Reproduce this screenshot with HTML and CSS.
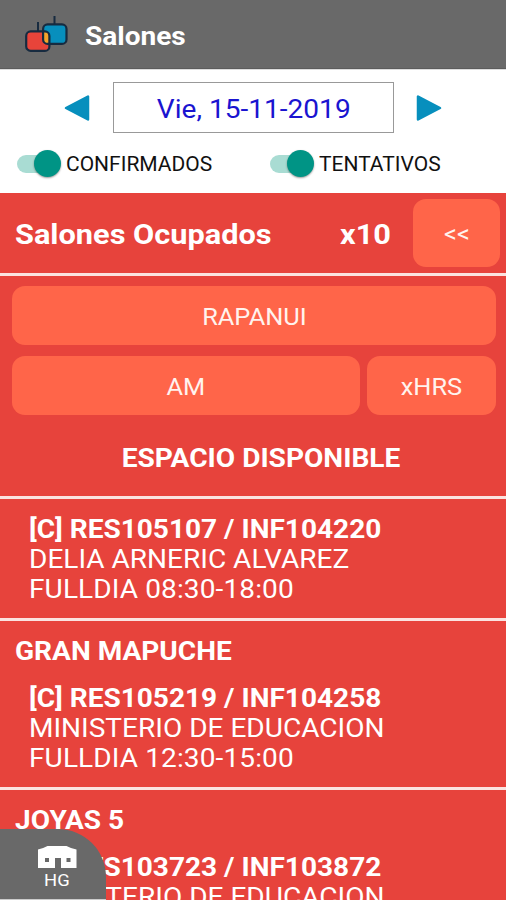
FILE: index.html
```html
<!DOCTYPE html>
<html lang="es">
<head>
    <meta charset="UTF-8">
    <meta name="viewport" content="width=device-width, initial-scale=1.0">
    <title>Salones</title>
    <link rel="stylesheet" href="styles.css">
</head>
<body>
    <header class="topbar">
        <svg class="logo" width="46" height="39" viewBox="0 0 46 39">
            <path d="M14 8v9M30.500 2v9" stroke="#172b40" stroke-width="2"/>
            <rect x="2.200" y="17.400" width="23.200" height="19.500" rx="4.500" fill="#e8443a"/>
            <rect x="19.100" y="10.400" width="23.400" height="19.500" rx="4.500" fill="#078fbd"/>
            <path d="M19.100 17.400h2a4.300 4.300 0 0 1 4.300 4.300v8.200h-2a4.300 4.300 0 0 1-4.300-4.300z" fill="#f7a42b"/>
            <rect x="2.200" y="17.400" width="23.200" height="19.500" rx="4.500" fill="none" stroke="#172b40" stroke-width="2.200"/>
            <rect x="19.100" y="10.400" width="23.400" height="19.500" rx="4.500" fill="none" stroke="#172b40" stroke-width="2.200"/>
        </svg>
        <h1 class="wide">Salones</h1>
    </header>

    <div class="filters">
        <div class="date-row">
            <svg class="arrow" width="26" height="28" viewBox="0 0 26 28">
                <path d="M24 2.500v23L2 14z" fill="#078fbd" stroke="#078fbd" stroke-width="2.500" stroke-linejoin="round"/>
            </svg>
            <div class="date"><span class="wide-center">Vie, 15-11-2019</span></div>
            <svg class="arrow" width="26" height="28" viewBox="0 0 26 28">
                <path d="M2 2.500v23L24 14z" fill="#078fbd" stroke="#078fbd" stroke-width="2.500" stroke-linejoin="round"/>
            </svg>
        </div>
        <div class="switch-row">
            <div class="option"><span class="switch"></span><span class="label">CONFIRMADOS</span></div>
            <div class="option"><span class="switch"></span><span class="label">TENTATIVOS</span></div>
        </div>
    </div>

    <main>
        <div class="summary">
            <h2 class="wide">Salones Ocupados</h2>
            <span class="count wide">x10</span>
            <button class="back"><span class="wide-center">&lt;&lt;</span></button>
        </div>

        <div class="room">
            <button class="room-name"><span class="wide-center">RAPANUI</span></button>
            <div class="room-times">
                <button class="am"><span class="wide-center">AM</span></button>
                <button class="hrs"><span class="wide-center">xHRS</span></button>
            </div>
            <h3 class="available"><span class="wide-center">ESPACIO DISPONIBLE</span></h3>
        </div>

        <div class="booking">
            <div class="entry wide">
                <p class="code">[C] RES105107 / INF104220</p>
                <p>DELIA ARNERIC ALVAREZ</p>
                <p class="hours">FULLDIA 08:30-18:00</p>
            </div>
        </div>

        <div class="booking">
            <h3 class="wide">GRAN MAPUCHE</h3>
            <div class="entry wide">
                <p class="code">[C] RES105219 / INF104258</p>
                <p>MINISTERIO DE EDUCACION</p>
                <p class="hours">FULLDIA 12:30-15:00</p>
            </div>
        </div>

        <div class="booking">
            <h3 class="wide">JOYAS 5</h3>
            <div class="entry wide">
                <p class="code">[C] RES103723 / INF103872</p>
                <p>MINISTERIO DE EDUCACION</p>
            </div>
        </div>
    </main>

    <div class="home-tab">
        <svg width="40" height="24" viewBox="0 0 40 24">
            <path fill="#fff" d="M1 4.500Q6 3.500 10.500 1h19q4.500 2.500 10 3.500V23H24V13h-6v10H1z"/>
            <path fill="#696969" d="M8 13h4v4H8zM29.500 13h4v4h-4z"/>
        </svg>
        <span class="wide-center">HG</span>
    </div>
</body>
</html>
```

FILE: styles.css
```css
* {
    box-sizing: border-box;
}
body {
    font-family: Roboto, Arial, sans-serif;
    margin: 0;
    height: 900px;
    overflow: hidden;
    position: relative;
    background-color: #e7433c;
    color: #fff;
    white-space: nowrap;
}
h1, h2, h3, p {
    margin: 0;
}
/* slightly extended lettering */
.wide {
    transform: scaleX(1.078);
    transform-origin: left;
}
.wide-center {
    display: inline-block;
    transform: scaleX(1.08);
}
.topbar {
    height: 69px;
    display: flex;
    align-items: center;
    padding-left: 24px;
    background-color: #696969;
    border-bottom: 1px solid #5c5c5c;
}
.topbar h1 {
    font-size: 26px;
    line-height: 30px;
    margin-left: 15px;
    padding-top: 3px;
}
.logo {
    margin-top: -1px;
}
.filters {
    height: 124px;
    padding-top: 12px;
    background-color: #fff;
    color: #111;
    border-top: 1px solid #ddd;
}
.date-row {
    display: flex;
    align-items: center;
    gap: 23px;
    height: 51px;
    padding-left: 64px;
}
.date {
    width: 281px;
    height: 51px;
    display: flex;
    justify-content: center;
    align-items: center;
    border: 1px solid #999;
    color: #1a14d0;
    font-size: 26px;
    padding-top: 2px;
}
.arrow {
    margin-top: 1px;
}
.date + .arrow {
    margin-left: -1px;
}
.switch-row {
    display: flex;
    padding: 15px 0 0 17px;
}
.option {
    flex: none;
    display: flex;
    align-items: center;
    width: 253px;
    height: 31px;
    font-size: 20px;
}
.label {
    padding-top: 1px;
    transform: scaleX(1.05);
    transform-origin: left;
}
.switch {
    width: 40px;
    height: 18px;
    border-radius: 9px;
    background-color: #a9dcd3;
    display: flex;
    align-items: center;
    justify-content: flex-end;
    margin-right: 9px;
}
.switch::after {
    content: "";
    flex: none;
    width: 27px;
    height: 27px;
    border-radius: 50%;
    background-color: #009485;
    box-shadow: 0 1px 2px rgba(0,0,0,0.4);
    margin-right: -4px;
}
button {
    font-family: inherit;
    border: none;
    border-radius: 13px;
    background-color: #ff6549;
    color: #fff3ee;
    font-size: 23.5px;
    padding: 0;
}
.summary {
    display: flex;
    align-items: center;
    height: 83px;
    padding: 0 6px 0 15px;
    border-bottom: 3px solid #fbe3e0;
}
.summary h2, .count {
    font-size: 28.5px;
    line-height: 32px;
    font-weight: bold;
    padding-top: 3px;
}
.summary h2 {
    width: 325px;
}
.count {
    width: 73px;
}
.back {
    width: 87px;
    height: 68px;
    margin-top: -1px;
    padding-top: 3px;
}
.room {
    height: 223px;
    padding: 10px 10px 0 12px;
    border-bottom: 3px solid #fbe3e0;
}
.room-name {
    display: block;
    width: 484px;
    height: 59px;
    padding-top: 2px;
}
.room-times {
    display: flex;
    gap: 7px;
    margin-top: 11px;
}
.am {
    width: 348px;
    height: 59px;
    padding-top: 2px;
}
.hrs {
    width: 129px;
    height: 59px;
    padding-top: 2px;
}
h3 {
    font-size: 26px;
    line-height: 30px;
}
.available {
    margin-top: 28px;
    text-align: center;
    padding-left: 13px;
}
.booking {
    padding: 15px 15px 14px;
    border-bottom: 3px solid #fbe3e0;
}
.booking h3 {
    margin-bottom: 17px;
}
.entry {
    padding-left: 13px;
    font-size: 26px;
    line-height: 30px;
}
.code {
    font-weight: bold;
}
.hours {
    letter-spacing: 0.1px;
}
.home-tab {
    position: absolute;
    left: 0;
    bottom: 0;
    width: 106px;
    height: 71px;
    padding: 16px 0 0 7px;
    border-radius: 0 48px 0 0;
    background-color: #696969;
    border-bottom: 1px solid #ccc;
    display: flex;
    flex-direction: column;
    align-items: center;
    font-size: 17px;
    line-height: 22px;
}
```
